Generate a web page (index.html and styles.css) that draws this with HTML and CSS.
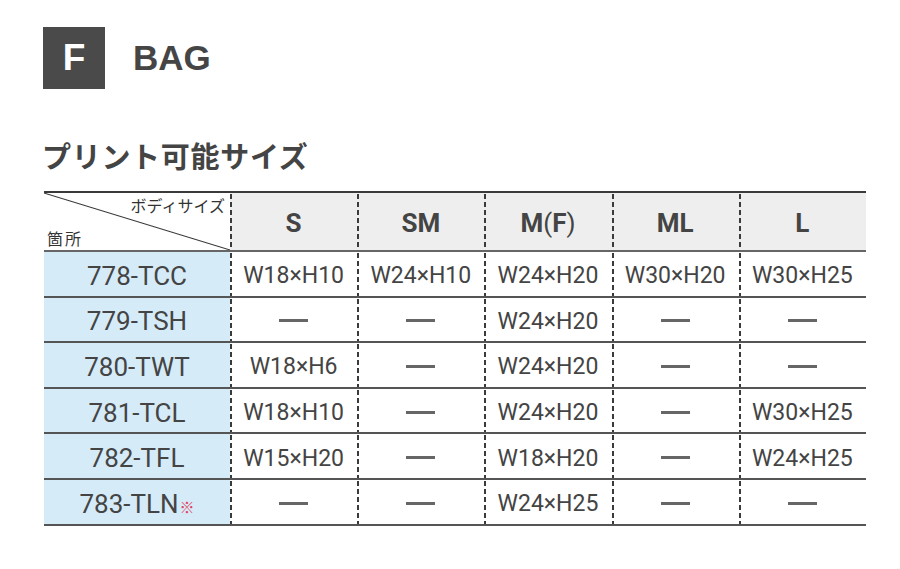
FILE: index.html
```html
<!DOCTYPE html>
<html lang="ja">
<head>
<meta charset="utf-8">
<title>BAG</title>
<link rel="stylesheet" href="styles.css">
</head>
<body>
<div class="page">
  <header class="cat">
    <div class="cat-badge">F</div>
    <h1 class="cat-name">BAG</h1>
  </header>
  <h2 class="sub">プリント可能サイズ</h2>
  <table class="sizes">
    <thead>
      <tr>
        <th class="corner"><span class="c-top">ボディサイズ</span><span class="c-bot">箇所</span></th>
        <th>S</th>
        <th>SM</th>
        <th>M<span class="paren">(</span>F<span class="paren">)</span></th>
        <th>ML</th>
        <th>L</th>
      </tr>
    </thead>
    <tbody>
      <tr><th>778-TCC</th><td>W18×H10</td><td>W24×H10</td><td>W24×H20</td><td>W30×H20</td><td>W30×H25</td></tr>
      <tr><th>779-TSH</th><td><span class="na">—</span></td><td><span class="na">—</span></td><td>W24×H20</td><td><span class="na">—</span></td><td><span class="na">—</span></td></tr>
      <tr><th>780-TWT</th><td>W18×H6</td><td><span class="na">—</span></td><td>W24×H20</td><td><span class="na">—</span></td><td><span class="na">—</span></td></tr>
      <tr><th>781-TCL</th><td>W18×H10</td><td><span class="na">—</span></td><td>W24×H20</td><td><span class="na">—</span></td><td>W30×H25</td></tr>
      <tr><th>782-TFL</th><td>W15×H20</td><td><span class="na">—</span></td><td>W18×H20</td><td><span class="na">—</span></td><td>W24×H25</td></tr>
      <tr><th>783-TLN<span class="note">※</span></th><td><span class="na">—</span></td><td><span class="na">—</span></td><td>W24×H25</td><td><span class="na">—</span></td><td><span class="na">—</span></td></tr>
    </tbody>
  </table>
</div>
</body>
</html>
```
FILE: styles.css
```css
* { box-sizing: border-box; }
html, body { margin: 0; padding: 0; background: #fff; }
body {
  font-family: Roboto, "Noto Sans CJK JP", sans-serif;
  color: #444;
}
.page {
  padding: 27px 34px 0 43px;
}
.cat {
  display: flex;
  align-items: center;
  gap: 28px;
  height: 62px;
}
.cat-badge {
  width: 62px;
  height: 62px;
  background: #4a4a4a;
  color: #fff;
  font-family: "Liberation Sans", Arial, sans-serif;
  font-weight: bold;
  font-size: 37px;
  display: flex;
  align-items: center;
  justify-content: center;
}
.cat-name {
  margin: 0;
  font-family: "Liberation Sans", Arial, sans-serif;
  font-weight: bold;
  font-size: 35px;
  color: #454545;
}
.sub {
  margin: 46px 0 0 -1px;
  font-family: "Noto Sans CJK JP", sans-serif;
  font-weight: bold;
  font-size: 29px;
  letter-spacing: 0.7px;
  line-height: 40px;
  color: #444;
}
.sizes {
  margin: 16px 0 0 1px;
  width: 822px;
  border-collapse: collapse;
  table-layout: fixed;
}
.sizes th, .sizes td {
  padding: 0;
  text-align: center;
}
.sizes tr > :first-child { width: 186px; }
.sizes td,
.sizes thead th:not(.corner) {
  background-image: linear-gradient(#3a3a3a 0 5px, transparent 5px);
  background-size: 1.5px 8px;
  background-repeat: repeat-y;
  background-position: 0 1px;
}
.sizes thead tr {
  border-top: 2px solid #3a3a3a;
  border-bottom: 2px solid #666;
  height: 59px;
}
.sizes thead th {
  background-color: #eeeeee;
  font-size: 26px;
  font-weight: bold;
  color: #444;
  padding-top: 2px;
}
.paren { font-weight: normal; }
.sizes thead th.corner {
  background: linear-gradient(to top right, transparent calc(50% - 1px), #333 50%, transparent calc(50% + 1px)) #fff;
  position: relative;
  font-weight: normal;
  font-family: "Noto Sans CJK JP", sans-serif;
  font-size: 16px;
  color: #333;
}
.c-top {
  position: absolute;
  top: 1px;
  right: 5px;
  line-height: 22px;
}
.c-bot {
  position: absolute;
  bottom: 1px;
  left: 3px;
  line-height: 22px;
  letter-spacing: 2px;
}
.sizes tbody tr {
  height: 45.6px;
  border-bottom: 2px solid #555;
}
.sizes tbody th,
.sizes tbody td {
  padding-top: 4px;
}
.sizes tbody th {
  background: #d6ebf8;
  font-weight: normal;
  font-size: 26px;
  color: #444;
}
.sizes tbody td {
  font-size: 23px;
  color: #444;
}
.na {
  display: inline-block;
  width: 29px;
  height: 3px;
  background: #666;
  vertical-align: middle;
  color: transparent;
  overflow: hidden;
  font-size: 1px;
  line-height: 3px;
  position: relative;
  top: -2px;
}
.note {
  color: #e04060;
  font-size: 15px;
  font-family: "Noto Sans CJK JP", sans-serif;
  margin-left: 1px;
}
```
